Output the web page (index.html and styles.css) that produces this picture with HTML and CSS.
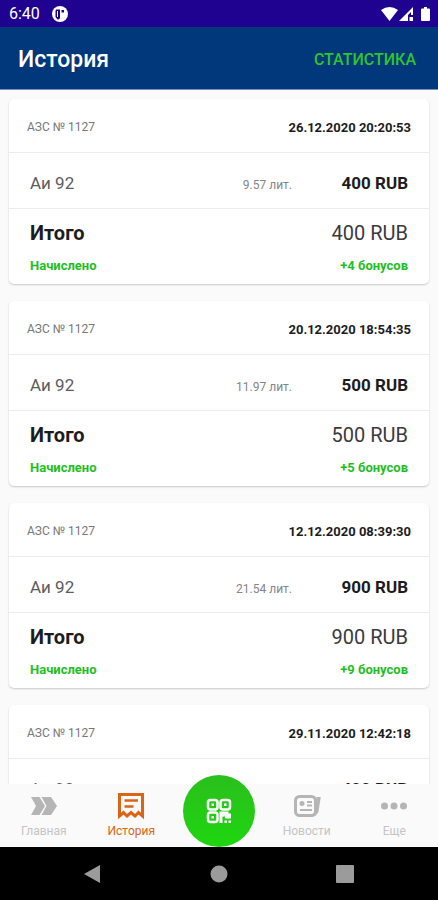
FILE: index.html
```html
<!DOCTYPE html>
<html lang="ru">
<head>
    <meta charset="UTF-8">
    <meta name="viewport" content="width=device-width, initial-scale=1.0">
    <title>История</title>
    <link rel="stylesheet" href="styles.css">
</head>
<body>
    <div class="app">
        <div class="status-bar">
            <span class="clock">6:40</span>
            <svg class="status-logo" viewBox="0 0 16 16" width="16" height="16">
                <circle cx="8" cy="8" r="8" fill="#fff"/>
                <path d="M4 3.500h4V12q-1 2-2.500 1.500L3.500 11V5zM9.500 4H12v2.500H9.500z" fill="#1f0390"/>
                <path d="M5.500 5v6" stroke="#fff" stroke-width="1"/>
            </svg>
            <div class="status-icons">
                <svg viewBox="0 0 17 14" width="17" height="14"><path d="M0 3Q8.500-3 17 3L8.500 14z" fill="#fff"/></svg>
                <svg viewBox="0 0 15 14" width="15" height="14">
                    <path d="M0 14L14 0v8h-2V5L9 8v6z" fill="#fff"/>
                    <path d="M10.500 10H14v4h-3.500z" fill="#fff"/>
                </svg>
                <svg class="battery" viewBox="0 0 9 14" width="9" height="14"><path d="M3 0h3v1.500h2q1 0 1 1V13q0 1-1 1H1q-1 0-1-1V2.500q0-1 1-1h2z" fill="#fff"/></svg>
            </div>
        </div>

        <header class="toolbar">
            <h1>История</h1>
            <button type="button" class="stats-button">СТАТИСТИКА</button>
        </header>

        <main class="history">
            <article class="card">
                <div class="card-head">
                    <span class="station">АЗС № 1127</span>
                    <time>26.12.2020 20:20:53</time>
                </div>
                <div class="card-item">
                    <span class="fuel">Аи 92</span>
                    <span class="volume">9.57 лит.</span>
                    <span class="price">400 RUB</span>
                </div>
                <div class="card-total">
                    <div class="total-row"><span class="total-label">Итого</span><span class="total-sum">400 RUB</span></div>
                    <div class="bonus-row"><span>Начислено</span><span class="bonus">+4 бонусов</span></div>
                </div>
            </article>
            <article class="card">
                <div class="card-head">
                    <span class="station">АЗС № 1127</span>
                    <time>20.12.2020 18:54:35</time>
                </div>
                <div class="card-item">
                    <span class="fuel">Аи 92</span>
                    <span class="volume">11.97 лит.</span>
                    <span class="price">500 RUB</span>
                </div>
                <div class="card-total">
                    <div class="total-row"><span class="total-label">Итого</span><span class="total-sum">500 RUB</span></div>
                    <div class="bonus-row"><span>Начислено</span><span class="bonus">+5 бонусов</span></div>
                </div>
            </article>
            <article class="card">
                <div class="card-head">
                    <span class="station">АЗС № 1127</span>
                    <time>12.12.2020 08:39:30</time>
                </div>
                <div class="card-item">
                    <span class="fuel">Аи 92</span>
                    <span class="volume">21.54 лит.</span>
                    <span class="price">900 RUB</span>
                </div>
                <div class="card-total">
                    <div class="total-row"><span class="total-label">Итого</span><span class="total-sum">900 RUB</span></div>
                    <div class="bonus-row"><span>Начислено</span><span class="bonus">+9 бонусов</span></div>
                </div>
            </article>
            <article class="card">
                <div class="card-head">
                    <span class="station">АЗС № 1127</span>
                    <time>29.11.2020 12:42:18</time>
                </div>
                <div class="card-item">
                    <span class="fuel">Аи 92</span>
                    <span class="volume"></span>
                    <span class="price">400 RUB</span>
                </div>
            </article>
        </main>

        <nav class="tabs">
            <a href="#" class="tab">
                <svg viewBox="0 0 28 28" width="28" height="28" fill="#b5b5b5">
                    <path d="M1 5h8.500l5.500 9-5.500 9H1l5-9z"/>
                    <path d="M11.500 5H21l6 9-6 9h-9.500l5-9z"/>
                </svg>
                <span>Главная</span>
            </a>
            <a href="#" class="tab active">
                <svg viewBox="0 0 28 28" width="28" height="28" fill="none" stroke="#dc6416">
                    <path d="M2.500 24V2.500h23V24l-4-3.500-3.500 3.500-4-3.500-4 3.500-3.500-3.500z" stroke-width="3"/>
                    <path d="M7.500 8.500h13.500M7.500 14.500h9" stroke-width="2.500"/>
                </svg>
                <span>История</span>
            </a>
            <a href="#" class="qr-button" aria-label="QR">
                <svg viewBox="0 0 26 26" width="26" height="26" fill="none" stroke="#fff" stroke-width="2.500">
                    <rect x="2" y="2" width="9.500" height="9.500" rx="2.500"/>
                    <rect x="14.500" y="2" width="9.500" height="9.500" rx="2.500"/>
                    <rect x="2" y="14.500" width="9.500" height="9.500" rx="2.500"/>
                    <path d="M5.500 6.750h2.500M18 6.750h2.500M5.500 19.250h2.500"/>
                    <path d="M13.500 13.500h9v2h2.500v5h-6v-2h-2.500V25h-3zM18.500 22.500h2.500V25h-2.500zM22.500 22.500H25V25h-2.500z" fill="#fff" stroke="none"/>
                </svg>
            </a>
            <a href="#" class="tab">
                <svg viewBox="0 0 28 28" width="28" height="28" fill="none" stroke="#b5b5b5" stroke-width="3">
                    <rect x="2.500" y="4.500" width="20" height="19" rx="4"/>
                    <path d="M23.500 6.500h2.500l-2 13-3 3.500"/>
                    <circle cx="9" cy="11.500" r="2.500" fill="#b5b5b5" stroke="none"/>
                    <path d="M14 10h5M14 13.500h5M7 18h12" stroke-width="2"/>
                </svg>
                <span>Новости</span>
            </a>
            <a href="#" class="tab">
                <svg viewBox="0 0 28 28" width="28" height="28" fill="#b5b5b5">
                    <circle cx="4.500" cy="14" r="3.500"/>
                    <circle cx="14" cy="14" r="3.500"/>
                    <circle cx="23.500" cy="14" r="3.500"/>
                </svg>
                <span>Еще</span>
            </a>
        </nav>

        <div class="system-nav">
            <button type="button" aria-label="Назад"><svg viewBox="0 0 18 18" width="18" height="18"><path d="M0 9L16 0v18z"/></svg></button>
            <button type="button" aria-label="Домой"><svg viewBox="0 0 18 18" width="18" height="18"><circle cx="9" cy="9" r="8.500"/></svg></button>
            <button type="button" aria-label="Обзор"><svg viewBox="0 0 18 18" width="18" height="18"><rect width="18" height="18" rx="1"/></svg></button>
        </div>
    </div>
</body>
</html>
```

FILE: styles.css
```css
:root {
    --green: #1fbe1f;
    --orange: #dc6416;
    --line: #ececec;
}
* {
    box-sizing: border-box;
}
body {
    margin: 0;
    font-family: Roboto, sans-serif;
    background-color: #fafafa;
    color: #1c1c1e;
}
.app {
    display: flex;
    flex-direction: column;
    height: 100vh;
}
svg {
    display: block;
}
a {
    color: inherit;
    text-decoration: none;
}
button {
    padding: 0;
    border: none;
    background: none;
    font-family: inherit;
    cursor: pointer;
}
.status-bar {
    display: flex;
    align-items: center;
    flex-shrink: 0;
    height: 27px;
    padding: 0 8px 0 9px;
    background-color: #1f0390;
    color: white;
}
.clock {
    font-size: 16px;
}
.status-logo {
    margin-left: 12px;
}
.status-icons {
    display: flex;
    gap: 1px;
    margin-left: auto;
}
.battery {
    margin-left: 6px;
}
.toolbar {
    display: flex;
    align-items: center;
    justify-content: space-between;
    flex-shrink: 0;
    height: 63px;
    padding: 2px 22px 0 18px;
    background-color: #00387b;
    border-bottom: 1px solid #7d8fc0;
    color: white;
}
h1 {
    margin: 0;
    font-size: 23px;
    font-weight: 500;
}
.stats-button {
    color: #2fc42f;
    font-size: 16px;
    font-weight: 500;
}
.history {
    flex: 1;
    min-height: 0;
    overflow: hidden;
    padding: 9px;
}
.card {
    margin: 0 0 17px;
    background-color: white;
    border-radius: 5px;
    box-shadow: 0 1px 2px rgba(0, 0, 0, 0.2);
}
.card-head {
    display: flex;
    align-items: center;
    justify-content: space-between;
    height: 54px;
    padding: 3px 18px 0;
    border-bottom: 1px solid var(--line);
}
.station {
    color: #77777a;
    font-size: 12px;
}
time {
    font-size: 13px;
    font-weight: 700;
}
.card-item {
    display: flex;
    align-items: baseline;
    height: 56px;
    padding: 20px 21px 0;
    border-bottom: 1px solid var(--line);
}
.fuel {
    color: #5c5c5e;
    font-size: 17px;
}
.volume {
    margin-left: auto;
    color: #858588;
    font-size: 12px;
}
.price {
    width: 116px;
    text-align: right;
    font-size: 17px;
    font-weight: 700;
}
.card-total {
    height: 75px;
    padding: 11px 21px 0;
}
.total-row, .bonus-row {
    display: flex;
    align-items: baseline;
    justify-content: space-between;
}
.total-row {
    line-height: 26px;
}
.total-label {
    font-size: 20px;
    font-weight: 700;
}
.total-sum {
    color: #3a3a3c;
    font-size: 20px;
}
.bonus-row {
    margin-top: 12px;
    color: var(--green);
    font-size: 13px;
    font-weight: 700;
}
.tabs {
    display: flex;
    flex-shrink: 0;
    height: 63px;
    background-color: #fafafa;
}
.tab {
    display: flex;
    flex: 1;
    flex-direction: column;
    align-items: center;
    padding-top: 8px;
    color: #c4c4c4;
    font-size: 12px;
}
.tab span {
    margin-top: 4px;
}
.active {
    color: var(--orange);
}
.qr-button {
    display: flex;
    align-items: center;
    justify-content: center;
    width: 72px;
    height: 72px;
    margin: -9px 8px 0;
    border-radius: 50%;
    background: linear-gradient(#2abf1d, #1fd60f);
}
.system-nav {
    display: flex;
    align-items: center;
    justify-content: center;
    flex-shrink: 0;
    gap: 108px;
    height: 53px;
    background-color: black;
    fill: #9b9b9b;
}
```
